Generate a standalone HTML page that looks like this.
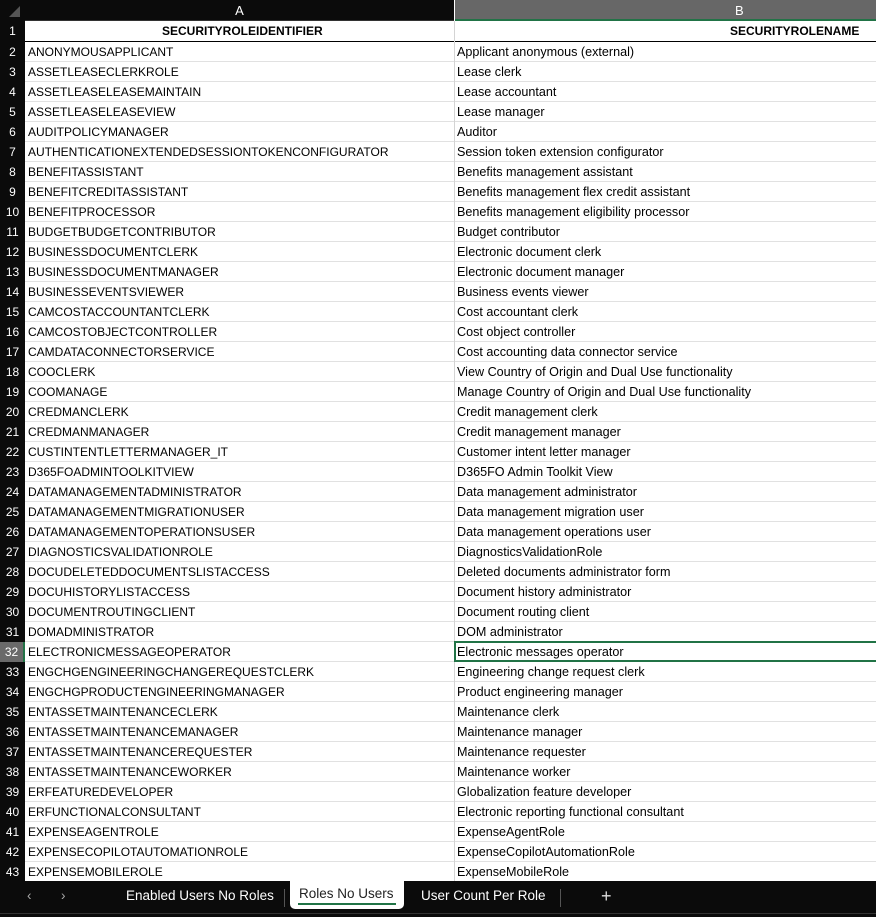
<!DOCTYPE html><html><head><style>
body{margin:0;width:876px;height:917px;overflow:hidden;background:#fff;font-family:"Liberation Sans",sans-serif;position:relative}
.ch{position:absolute;top:0;height:21px;line-height:21px;color:#fff;font-size:13px;text-align:center}
.r{position:absolute;left:0;width:876px;height:20px;border-bottom:1px solid #e1e1e1;box-sizing:border-box}
.n{position:absolute;left:0;top:0;width:25px;height:20px;background:#0b0b0b;color:#fff;font-size:12px;line-height:20px;text-align:center}
.a{position:absolute;left:28px;top:0;line-height:20px;font-size:12px;color:#000;white-space:nowrap}
.b{position:absolute;left:457px;top:0;line-height:20px;font-size:12.6px;color:#000;white-space:nowrap}
.v{position:absolute;left:454px;top:21px;width:1px;height:860px;background:#d4d4d4}
.tab{position:absolute;top:881px;height:30px;line-height:30px;color:#fff;font-size:13.5px}
</style></head><body>
<div class="ch" style="left:0;width:25px;background:#0b0b0b"><svg width="25" height="21"><polygon points="20,6 20,17 9,17" fill="#555"/></svg></div>
<div class="ch" style="left:25px;width:429px;background:#0b0b0b;border-bottom:1px solid #333;box-sizing:border-box">A</div>
<div class="ch" style="left:455px;width:421px;background:#676767;border-bottom:2px solid #217346;box-sizing:border-box;padding-left:280px;text-align:left">B</div>
<div id="rows"></div>
<div class="v"></div>
<div style="position:absolute;left:454px;top:641px;width:422px;height:21px;border:2px solid #217346;border-right:none;box-sizing:border-box"></div>
<div style="position:absolute;left:0;top:881px;width:876px;height:36px;background:#0b0b0b"></div>
<div class="tab" style="left:27px;color:#aaa">&#8249;</div>
<div class="tab" style="left:61px;color:#aaa">&#8250;</div>
<div class="tab" style="left:126px">Enabled Users No Roles</div>
<div style="position:absolute;left:284px;top:889px;width:1px;height:18px;background:#555"></div>
<div style="position:absolute;left:290px;top:881px;width:114px;height:28px;background:#fff;border-radius:0 0 5px 5px"></div>
<div class="tab" style="left:299px;top:879px;color:#222">Roles No Users</div>
<div style="position:absolute;left:298px;top:903px;width:98px;height:2px;background:#217346"></div>
<div class="tab" style="left:421px">User Count Per Role</div>
<div style="position:absolute;left:560px;top:889px;width:1px;height:18px;background:#555"></div>
<div class="tab" style="left:601px;font-size:18px;color:#ddd">+</div>
<div style="position:absolute;left:0;top:913px;width:876px;height:1px;background:#333"></div>
<script>
var d=[["SECURITYROLEIDENTIFIER","SECURITYROLENAME"],["ANONYMOUSAPPLICANT","Applicant anonymous (external)"],["ASSETLEASECLERKROLE","Lease clerk"],["ASSETLEASELEASEMAINTAIN","Lease accountant"],["ASSETLEASELEASEVIEW","Lease manager"],["AUDITPOLICYMANAGER","Auditor"],["AUTHENTICATIONEXTENDEDSESSIONTOKENCONFIGURATOR","Session token extension configurator"],["BENEFITASSISTANT","Benefits management assistant"],["BENEFITCREDITASSISTANT","Benefits management flex credit assistant"],["BENEFITPROCESSOR","Benefits management eligibility processor"],["BUDGETBUDGETCONTRIBUTOR","Budget contributor"],["BUSINESSDOCUMENTCLERK","Electronic document clerk"],["BUSINESSDOCUMENTMANAGER","Electronic document manager"],["BUSINESSEVENTSVIEWER","Business events viewer"],["CAMCOSTACCOUNTANTCLERK","Cost accountant clerk"],["CAMCOSTOBJECTCONTROLLER","Cost object controller"],["CAMDATACONNECTORSERVICE","Cost accounting data connector service"],["COOCLERK","View Country of Origin and Dual Use functionality"],["COOMANAGE","Manage Country of Origin and Dual Use functionality"],["CREDMANCLERK","Credit management clerk"],["CREDMANMANAGER","Credit management manager"],["CUSTINTENTLETTERMANAGER_IT","Customer intent letter manager"],["D365FOADMINTOOLKITVIEW","D365FO Admin Toolkit View"],["DATAMANAGEMENTADMINISTRATOR","Data management administrator"],["DATAMANAGEMENTMIGRATIONUSER","Data management migration user"],["DATAMANAGEMENTOPERATIONSUSER","Data management operations user"],["DIAGNOSTICSVALIDATIONROLE","DiagnosticsValidationRole"],["DOCUDELETEDDOCUMENTSLISTACCESS","Deleted documents administrator form"],["DOCUHISTORYLISTACCESS","Document history administrator"],["DOCUMENTROUTINGCLIENT","Document routing client"],["DOMADMINISTRATOR","DOM administrator"],["ELECTRONICMESSAGEOPERATOR","Electronic messages operator"],["ENGCHGENGINEERINGCHANGEREQUESTCLERK","Engineering change request clerk"],["ENGCHGPRODUCTENGINEERINGMANAGER","Product engineering manager"],["ENTASSETMAINTENANCECLERK","Maintenance clerk"],["ENTASSETMAINTENANCEMANAGER","Maintenance manager"],["ENTASSETMAINTENANCEREQUESTER","Maintenance requester"],["ENTASSETMAINTENANCEWORKER","Maintenance worker"],["ERFEATUREDEVELOPER","Globalization feature developer"],["ERFUNCTIONALCONSULTANT","Electronic reporting functional consultant"],["EXPENSEAGENTROLE","ExpenseAgentRole"],["EXPENSECOPILOTAUTOMATIONROLE","ExpenseCopilotAutomationRole"],["EXPENSEMOBILEROLE","ExpenseMobileRole"]];
var h="";for(var i=0;i<d.length;i++){var n=i+1,t;
if(i==0){h+='<div class="r" style="top:21px;height:21px;border-bottom:1px solid #000"><div class="n" style="height:21px;line-height:21px">1</div><div class="a" style="left:162px;font-weight:bold;line-height:21px">'+d[0][0]+'</div><div class="b" style="left:730px;font-weight:bold;font-size:12px;line-height:21px">'+d[0][1]+'</div></div>';continue;}
t=42+(i-1)*20;
h+='<div class="r" style="top:'+t+'px"><div class="n"'+(n==32?' style="background:#6a6a6a;border-right:2px solid #217346;box-sizing:border-box"':'')+'>'+n+'</div><div class="a">'+d[i][0]+'</div><div class="b">'+d[i][1]+'</div></div>';}
document.getElementById("rows").innerHTML=h;
</script>
</body></html>
